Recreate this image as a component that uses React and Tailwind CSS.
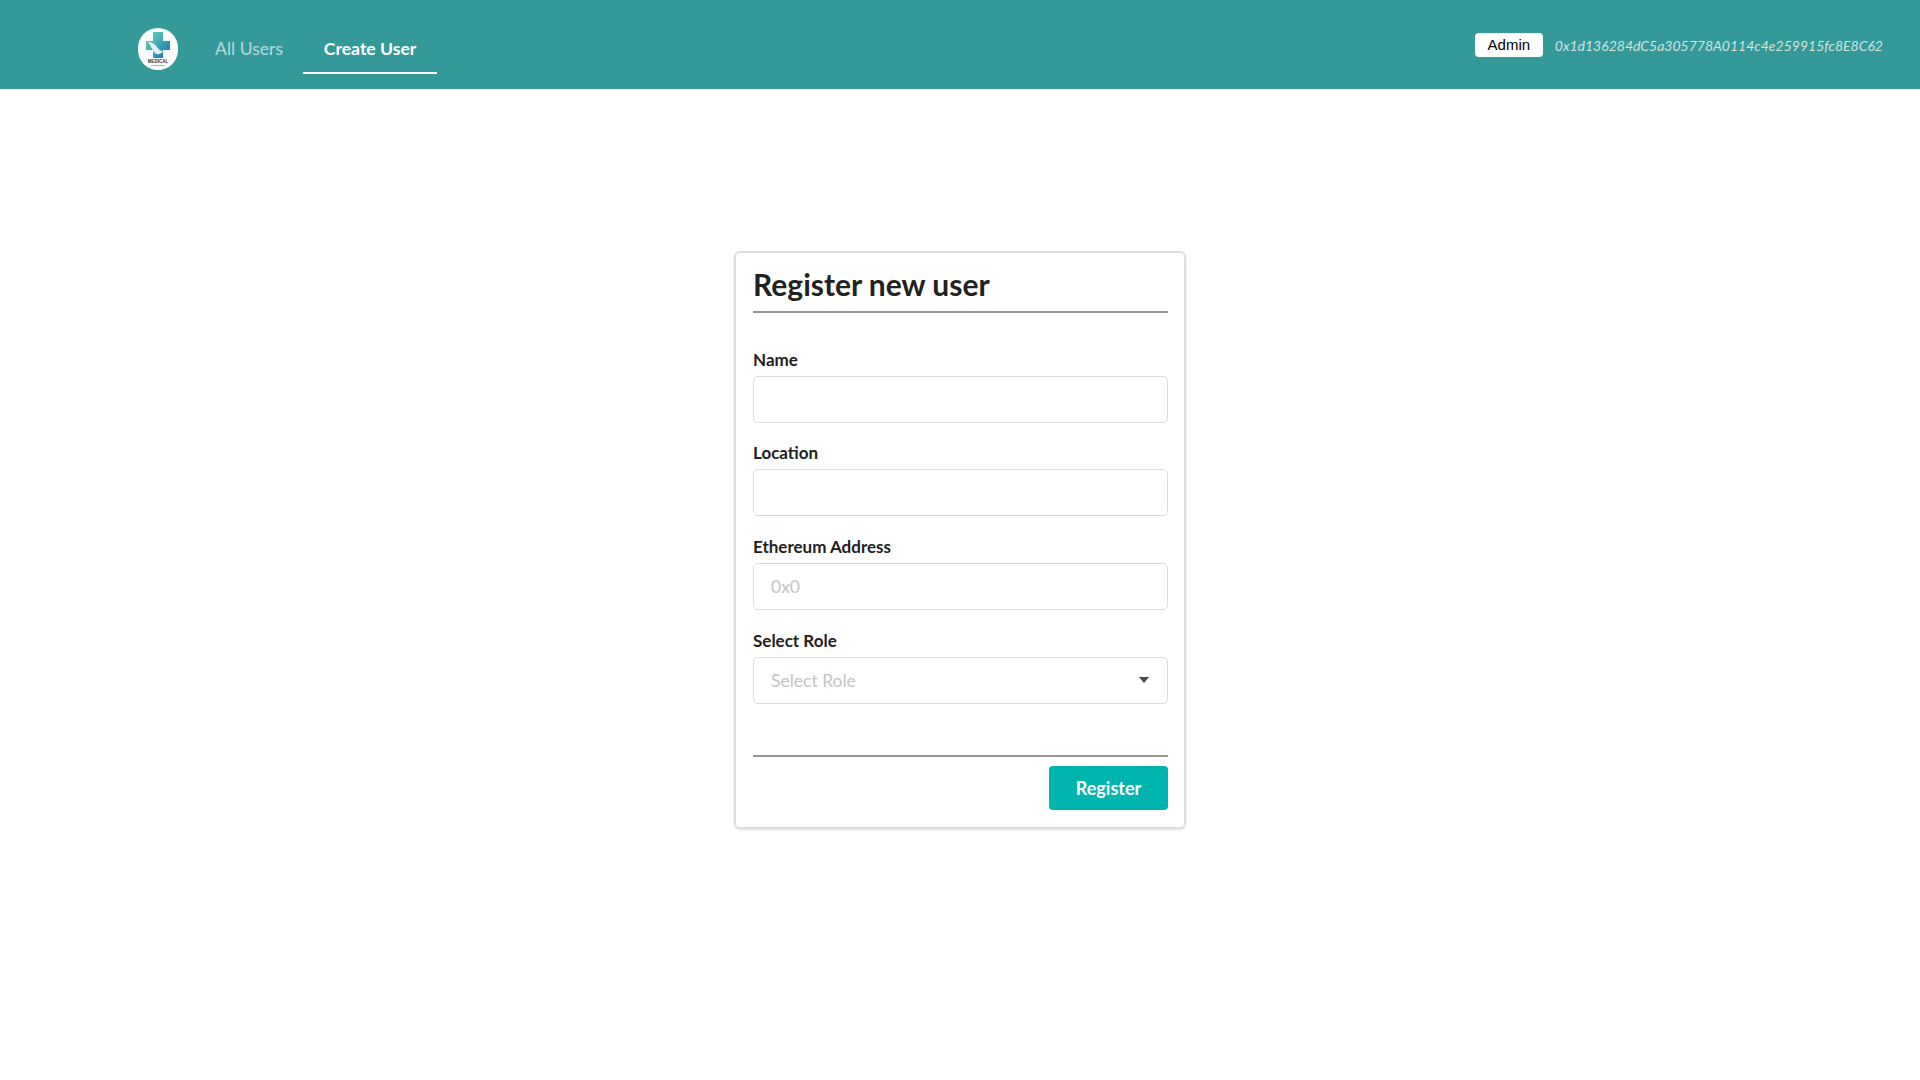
import React from "react";
import { Fragment } from "react";

const Logo = () => (
  <div className="w-[40px] h-[42px] rounded-full bg-white flex items-center justify-center">
    <svg width="40" height="42" viewBox="0 0 40 42">
      <defs>
        <linearGradient id="cross" x1="0" y1="0" x2="1" y2="1">
          <stop offset="0" stopColor="#6fd6bd" />
          <stop offset="0.5" stopColor="#3fa9b5" />
          <stop offset="1" stopColor="#1f66b8" />
        </linearGradient>
      </defs>
      <path
        d="M15 4h10v9h7v9h-7v8H15v-8H8v-9h7z"
        fill="url(#cross)"
      />
      <path d="M10 14c4 0 7 2 9 5s4 4 6 4c-2 4-7 4-9 1s-3-6-6-10z" fill="#ffffff" opacity="0.85" />
      <text x="20" y="35" textAnchor="middle" fontSize="4.5" fontWeight="700" fill="#333333" fontFamily="Liberation Sans, sans-serif">
        MEDICAL
      </text>
      <rect x="13" y="37" width="14" height="1" fill="#b5b5b5" />
    </svg>
  </div>
);

const fields = [
  { label: "Name", placeholder: "" },
  { label: "Location", placeholder: "" },
  { label: "Ethereum Address", placeholder: "0x0" },
];

export default function App() {
  return (
    <div className="min-h-screen bg-white font-['Lato',sans-serif] text-[#212121]">
      {/* Navbar */}
      <div className="h-[89px] bg-[#339999] flex justify-between pl-[138px] pr-[37px]">
        <div className="flex items-start">
          <div className="mt-[28px]">
            <Logo />
          </div>
          <a className="ml-[37px] mt-[36px] text-[17.6px] leading-[25px] text-[#b5dcdc]">All Users</a>
          <a className="ml-[20px] mt-[36px] h-[38px] w-[134px] text-center border-b-2 border-white text-[17.6px] leading-[25px] font-bold text-white">
            Create User
          </a>
        </div>
        <div className="flex items-start mt-[33px]">
          <span className="h-[24px] w-[68px] text-center rounded-[4px] bg-white text-black text-[15px] leading-[24px] font-['Liberation_Sans',sans-serif]">
            Admin
          </span>
          <span className="ml-[12px] text-[14px] leading-[25px] italic text-[#d3e3e0]">
            0x1d136284dC5a305778A0114c4e259915fc8E8C62
          </span>
        </div>
      </div>

      {/* Form card */}
      <div className="flex justify-center pt-[162px]">
        <div className="w-[452px] h-[578px] pl-[17px] pr-[16px] pt-[11px] bg-white border-2 border-[#dedede] rounded-[6px] shadow-sm">
          <h2 className="text-[30px] leading-[40px] font-bold text-[#212121]">Register new user</h2>
          <div className="mt-[7px] border-t-2 border-[#969696]" />

          <div className="mt-[36.6px]">
            {fields.map((f) => (
              <Fragment key={f.label}>
                <label className="block text-[17px] leading-[20px] font-bold mb-[6px]">{f.label}</label>
                <input
                  className="block w-full h-[47px] mb-[20.67px] px-[17px] border border-[#dcdcdc] rounded-[5px] text-[17.5px] outline-none placeholder:text-[#c4c4c4]"
                  placeholder={f.placeholder}
                  readOnly
                />
              </Fragment>
            ))}
            <label className="block text-[17px] leading-[20px] font-bold mb-[6px]">Select Role</label>
            <div className="flex items-center justify-between h-[47px] pl-[17px] pr-[18px] border border-[#dcdcdc] rounded-[5px] text-[17.5px] text-[#c4c4c4]">
              <span className="mt-[2px]">Select Role</span>
              <svg width="10" height="6" viewBox="0 0 10 6">
                <path d="M0 0h10L5 6z" fill="#444444" />
              </svg>
            </div>
          </div>

          <div className="mt-[51.4px] border-t-2 border-[#969696]" />
          <div className="flex justify-end mt-[9px]">
            <button className="w-[119px] h-[44px] pt-[1px] rounded-[4px] bg-[#00b5ad] text-white text-[18px] font-bold">
              Register
            </button>
          </div>
        </div>
      </div>
    </div>
  );
}
